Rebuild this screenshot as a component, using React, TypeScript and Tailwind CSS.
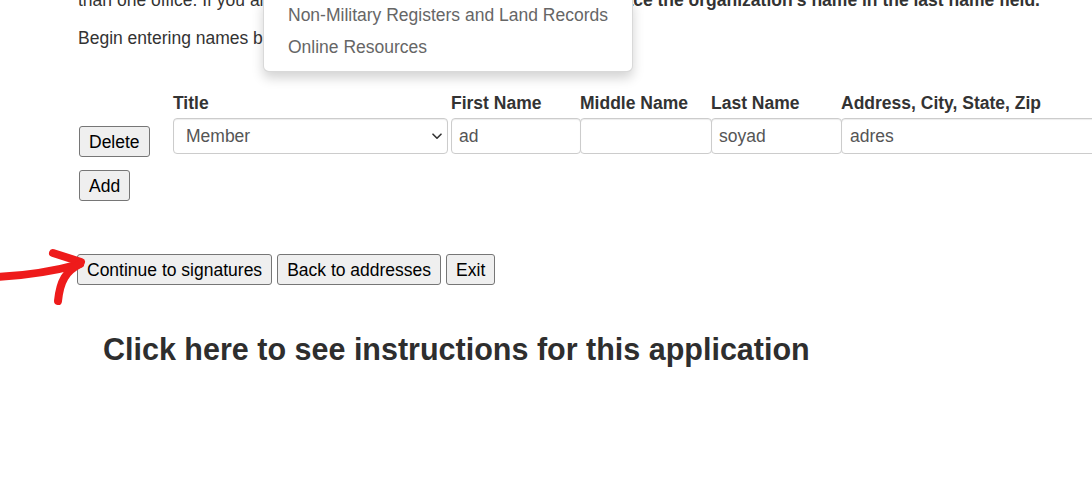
import React from "react";

function Btn({ children, className = "" }: { children: React.ReactNode; className?: string }) {
  return (
    <button
      type="button"
      className={`h-[31px] shrink-0 px-[9px] border border-[#767676] rounded-[3px] bg-[#efefef] text-black text-[17.5px] leading-[20px] ${className}`}
    >
      {children}
    </button>
  );
}

function TextInput({ value, className = "" }: { value: string; className?: string }) {
  return (
    <input
      readOnly
      value={value}
      className={`h-[36px] shrink-0 border border-[#ccc] rounded-[4px] pl-[7px] pr-[8px] text-[#555] text-[17.5px] bg-white outline-none shadow-[inset_0_1px_1px_rgba(0,0,0,0.075)] ${className}`}
    />
  );
}

export default function App() {
  return (
    <div className="relative w-[1092px] h-[494px] overflow-hidden bg-white font-['Liberation_Sans',Arial,sans-serif] text-[17.5px] text-[#333]">
      <div className="flex flex-col pl-[78px]">
        <p className="mt-[-12px] leading-[25px] whitespace-nowrap">
          than one office. If you are entering these names for an organization, <b>place the organization's name in the last name field.</b>
        </p>
        <p className="mt-[13px] leading-[25px] whitespace-nowrap">Begin entering names below.</p>

        <div className="flex mt-[40px]">
          <div className="w-[95px] shrink-0 pt-[35px] pl-px flex flex-col items-start gap-[13px]">
            <Btn>Delete</Btn>
            <Btn>Add</Btn>
          </div>
          <div className="flex flex-col">
            <div className="flex h-[25px] leading-[25px] font-bold whitespace-nowrap">
              <div className="w-[278px] shrink-0">Title</div>
              <div className="w-[129px] shrink-0">First Name</div>
              <div className="w-[131px] shrink-0">Middle Name</div>
              <div className="w-[130px] shrink-0">Last Name</div>
              <div className="shrink-0">Address, City, State, Zip</div>
            </div>
            <div className="flex mt-[2px]">
              <div className="relative w-[275px] h-[36px] shrink-0">
                <select
                  className="appearance-none w-full h-full border border-[#ccc] rounded-[4px] pl-[12px] text-[#555] text-[17.5px] bg-white outline-none shadow-[inset_0_1px_1px_rgba(0,0,0,0.075)]"
                  defaultValue="Member"
                >
                  <option>Member</option>
                </select>
                <svg
                  className="absolute right-[6px] top-[15px] pointer-events-none"
                  width="10"
                  height="7"
                  viewBox="0 0 10 7"
                  fill="none"
                >
                  <path d="M1 1.2 L5 5.2 L9 1.2" stroke="#333" strokeWidth="1.6" strokeLinecap="round" strokeLinejoin="round" />
                </svg>
              </div>
              <TextInput value="ad" className="ml-[3px] w-[130px]" />
              <TextInput value="" className="-ml-px w-[132px]" />
              <TextInput value="soyad" className="-ml-px w-[131px]" />
              <TextInput value="adres" className="-ml-px w-[300px] pl-[8px]" />
            </div>
          </div>
        </div>

        <div className="flex gap-[5px] mt-[53px] -ml-px">
          <Btn>Continue to signatures</Btn>
          <Btn>Back to addresses</Btn>
          <Btn>Exit</Btn>
        </div>

        <h2 className="mt-[46px] ml-[25px] text-[30.5px] leading-[36px] font-bold text-[#2e2e2e] whitespace-nowrap">
          Click here to see instructions for this application
        </h2>
      </div>

      {/* dropdown menu overlay */}
      <div className="absolute left-[263px] top-[-1px] w-[370px] bg-white border border-[rgba(0,0,0,0.15)] rounded-b-[6px] shadow-[0_6px_12px_rgba(0,0,0,0.175)] pb-[8px]">
        <div className="-mt-px pl-[24px] h-[32px] leading-[32px] text-[#666] whitespace-nowrap">Non-Military Registers and Land Records</div>
        <div className="pl-[24px] h-[32px] leading-[32px] text-[#666] whitespace-nowrap">Online Resources</div>
      </div>

      {/* red arrow annotation */}
      <svg className="absolute left-0 top-[245px]" width="95" height="65" viewBox="0 0 95 65" fill="none">
        <path d="M-4 32 Q 40 30 80 19" stroke="#ee1b1b" strokeWidth="8" strokeLinecap="round" />
        <path d="M53 8 L81 17" stroke="#ee1b1b" strokeWidth="8" strokeLinecap="round" />
        <path d="M80 19 C 66 26, 60 36, 58 56" stroke="#ee1b1b" strokeWidth="8" strokeLinecap="round" />
      </svg>
    </div>
  );
}
